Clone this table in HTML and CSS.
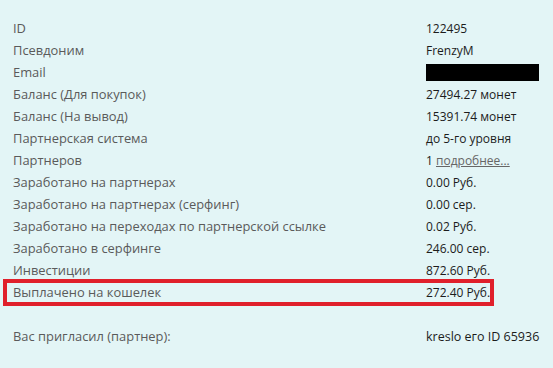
FILE: index.html
```html
<!DOCTYPE html>
<html lang="ru">
<head>
<meta charset="utf-8">
<link rel="stylesheet" href="styles.css">
</head>
<body>
<div class="info">
  <div class="row"><div class="k">ID</div><div class="v">122495</div></div>
  <div class="row"><div class="k">Псевдоним</div><div class="v">FrenzyM</div></div>
  <div class="row"><div class="k">Email</div><div class="v"><span class="hidden"></span></div></div>
  <div class="row"><div class="k">Баланс (Для покупок)</div><div class="v">27494.27 монет</div></div>
  <div class="row"><div class="k">Баланс (На вывод)</div><div class="v">15391.74 монет</div></div>
  <div class="row"><div class="k">Партнерская система</div><div class="v">до 5-го уровня</div></div>
  <div class="row"><div class="k">Партнеров</div><div class="v">1 <a class="more" href="#">подробнее...</a></div></div>
  <div class="row"><div class="k">Заработано на партнерах</div><div class="v">0.00 Руб.</div></div>
  <div class="row"><div class="k">Заработано на партнерах (серфинг)</div><div class="v">0.00 сер.</div></div>
  <div class="row"><div class="k">Заработано на переходах по партнерской ссылке</div><div class="v">0.02 Руб.</div></div>
  <div class="row"><div class="k">Заработано в серфинге</div><div class="v">246.00 сер.</div></div>
  <div class="row"><div class="k">Инвестиции</div><div class="v">872.60 Руб.</div></div>
  <div class="row marked"><div class="k">Выплачено на кошелек</div><div class="v">272.40 Руб.</div></div>
  <div class="row empty"></div>
  <div class="row"><div class="k">Вас пригласил (партнер):</div><div class="v latin">kreslo его ID 65936</div></div>
</div>
</body>
</html>
```
FILE: styles.css
```css
html, body {
  margin: 0;
  padding: 0;
  background: #e3f5f6;
}
body {
  width: 553px;
  height: 368px;
  overflow: hidden;
  font-family: "Open Sans", "Noto Sans", sans-serif;
}
.info {
  padding-top: 17px;
}
.row {
  position: relative;
  display: grid;
  grid-template-columns: 413px 1fr;
  height: 22px;
  align-items: center;
  padding-left: 13px;
}
.k {
  color: #5a5a5a;
  font-size: 12.9px;
  white-space: nowrap;
}
.v {
  color: #1c1c1c;
  font-size: 12px;
  white-space: nowrap;
}
.v.latin {
  font-size: 12.5px;
}
.hidden {
  display: block;
  width: 113px;
  height: 17px;
  background: #000;
}
.more {
  color: #666;
  text-decoration: underline;
}
.marked::after {
  content: "";
  position: absolute;
  left: 3px;
  top: -2px;
  width: 491px;
  height: 27px;
  border: 4px solid #e0202b;
  box-sizing: border-box;
}
```
